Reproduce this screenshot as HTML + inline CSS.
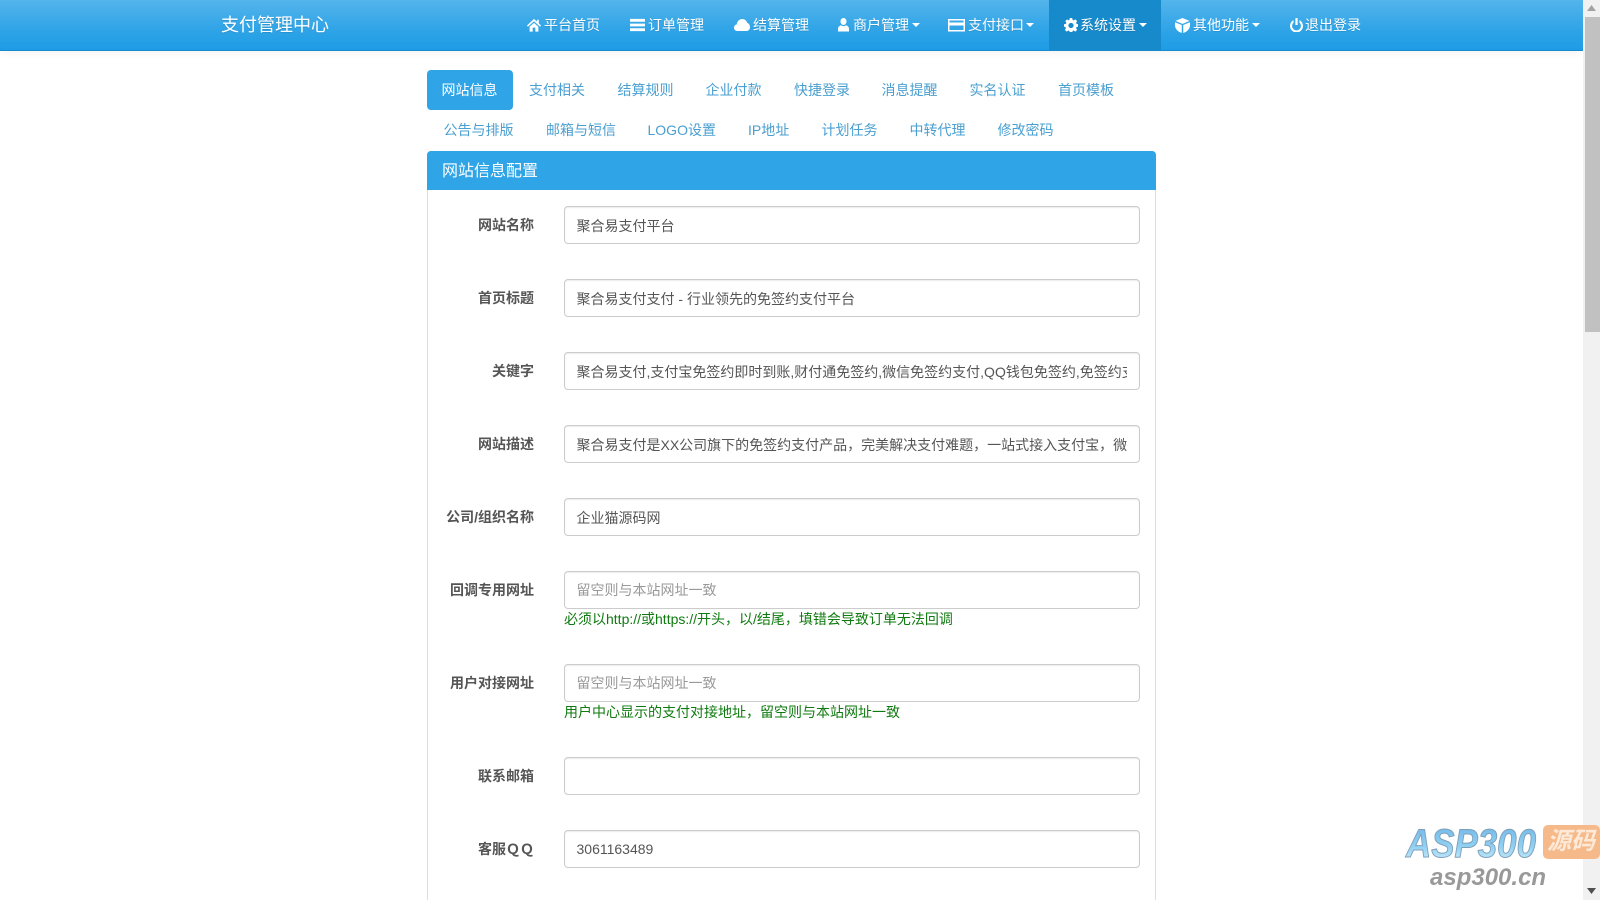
<!DOCTYPE html>
<html lang="zh-CN">
<head>
<meta charset="utf-8">
<title>支付管理中心</title>
<style>
html,body{margin:0;padding:0;width:1600px;height:900px;overflow:hidden;background:#fff}
body{position:relative;font-family:"Liberation Sans","Noto Sans CJK SC",sans-serif;font-size:14px;color:#555}
.nav{position:absolute;left:0;top:0;width:1583px;height:50px;background:linear-gradient(#54b4eb,#2fa4e7 60%,#1d9ce5);border-bottom:1px solid #178acc;box-shadow:0 2px 8px rgba(0,0,0,.05)}
.active{position:absolute;left:1049px;top:0;width:112px;height:50px;background:#178acc}
.t{position:absolute;white-space:nowrap;line-height:20px;height:20px}
.n{color:#fff;top:15px;text-shadow:0 1px 0 rgba(0,0,0,.1)}
.p{color:#4a9fd0}
.ic{position:absolute;fill:#fff}
.caret{position:absolute;top:23px;width:0;height:0;border-left:4px solid transparent;border-right:4px solid transparent;border-top:4px solid #fff}
.pill{position:absolute;left:427px;top:70px;width:86px;height:40px;border-radius:4px;background:#2fa4e7}
.panel{position:absolute;left:427px;top:150.5px;width:729px;height:780px;border:1px solid #ddd;border-radius:4px;box-sizing:border-box;background:#fff}
.head{position:absolute;left:427px;top:150.5px;width:729px;height:39.5px;background:#2fa4e7;border-radius:4px 4px 0 0}
.in{position:absolute;left:564px;width:576px;height:38px;box-sizing:border-box;border:1px solid #ccc;border-radius:4px;padding:0 12px 0 11.5px;line-height:37px;overflow:hidden;white-space:nowrap;color:#555;background:#fff;box-shadow:inset 0 1px 1px rgba(0,0,0,.075)}
.in span{display:block;overflow:hidden;position:relative;top:1px}
.in.ph span,.in.num span{top:0}
.ph{color:#999}
.l{position:absolute;left:430px;width:104px;text-align:right;font-weight:700;line-height:20px;white-space:nowrap;color:#555}
.h{position:absolute;left:564px;color:#0f7a0f;line-height:20px;white-space:nowrap}
.sb{position:absolute;left:1583px;top:0;width:17px;height:900px;background:#f1f1f1}
.th{position:absolute;left:2px;top:17px;width:15px;height:315px;background:#c1c1c1}
.wm{position:absolute;font-family:"Liberation Sans","Noto Sans CJK SC",sans-serif;font-style:italic;font-weight:700;white-space:nowrap}
</style>
</head>
<body>
<div class="nav"></div>
<div class="active"></div>
<div class="t" style="left:221px;top:15px;font-size:18px;color:#fff;text-shadow:0 1px 0 rgba(0,0,0,.1)">支付管理中心</div>

<svg class="ic" style="left:527px;top:18px" width="14" height="14" viewBox="0 0 16 16"><path d="M8 1 0 8.500 1 10l7-6.300L15 10l1-1.500-2.500-2.400V2h-2v2.200zM3 10v5.500h3.500V11h3v4.500H13V10L8 5.500z"/></svg>
<div class="t n" style="left:544px">平台首页</div>

<svg class="ic" style="left:630px;top:18px" width="15" height="14" viewBox="0 0 16 15"><path d="M0 1h16v3H0zM0 6h16v3H0zM0 11h16v3H0z"/></svg>
<div class="t n" style="left:648px">订单管理</div>

<svg class="ic" style="left:734px;top:18px" width="16" height="14" viewBox="0 0 16 14"><path d="M3.500 13C1.500 13 0 11.500 0 9.700 0 8 1.200 6.700 2.800 6.400 3 3.500 5.300 1 8.200 1c2.400 0 4.400 1.600 5 3.900C15 5.500 16 7.300 16 9.200 16 11.300 14.400 13 12.300 13z"/></svg>
<div class="t n" style="left:753px">结算管理</div>

<svg class="ic" style="left:838px;top:18px" width="11" height="14" viewBox="0 0 11 14"><path d="M5.500 0C7.300 0 8.500 1.500 8.500 3.400S7.300 7 5.500 7 2.500 5.300 2.500 3.400 3.700 0 5.500 0zM3 7.200c.7.600 1.500.9 2.500.9s1.800-.3 2.500-.9C9.900 7.800 11 9 11 11v2.500H0V11c0-2 1.100-3.200 3-3.800z"/></svg>
<div class="t n" style="left:853px">商户管理</div>
<div class="caret" style="left:912px"></div>

<svg class="ic" style="left:948px;top:18px" width="17" height="14" viewBox="0 0 17 14"><path fill-rule="evenodd" d="M0 1h17v12.500H0zM1.500 2.500v2h14v-2zM1.500 7.500V12h14V7.500z"/></svg>
<div class="t n" style="left:968px">支付接口</div>
<div class="caret" style="left:1026px"></div>

<svg class="ic" style="left:1064px;top:18px" width="14" height="14" viewBox="0 0 16 16"><path fill-rule="evenodd" d="M6.600 0h2.800l.4 2.200 1.300.5L13 1.500l2 2-1.200 1.900.5 1.300 2.200.4v2.800l-2.200.4-.5 1.300 1.200 1.900-2 2-1.900-1.200-1.300.5-.4 2.200H6.600l-.4-2.200-1.300-.5L3 15.500l-2-2 1.200-1.900-.5-1.300L0 9.900V7.100l2.200-.4.500-1.300L1.500 3.500l2-2 1.400 1.200 1.300-.5zM8 5.500a3 3 0 1 0 0 6 3 3 0 0 0 0-6z"/></svg>
<div class="t n" style="left:1080px">系统设置</div>
<div class="caret" style="left:1139px"></div>

<svg class="ic" style="left:1175px;top:18px" width="15" height="15" viewBox="0 0 16 16"><path d="M8 0 15.500 3 8 6.200.5 3zM0 4.500l7.200 3V16C3.500 15 0 11.500 0 8zM16 4.500V8c0 3.500-3.500 7-7.200 8V7.500z"/></svg>
<div class="t n" style="left:1193px">其他功能</div>
<div class="caret" style="left:1252px"></div>

<svg class="ic" style="left:1290px;top:18px" width="13" height="14" viewBox="0 0 14 15"><path d="M5.800 0h2.400v7.500H5.800z"/><path d="M3.800 2.300v2.600a4.800 4.800 0 1 0 6.400 0V2.300a7 7 0 1 1-6.400 0z"/></svg>
<div class="t n" style="left:1305px">退出登录</div>

<div class="pill"></div>
<div class="t" style="left:441.500px;top:80px;color:#fff">网站信息</div>
<div class="t p" style="left:529px;top:80px">支付相关</div>
<div class="t p" style="left:617.500px;top:80px">结算规则</div>
<div class="t p" style="left:705.500px;top:80px">企业付款</div>
<div class="t p" style="left:794px;top:80px">快捷登录</div>
<div class="t p" style="left:881.500px;top:80px">消息提醒</div>
<div class="t p" style="left:969.500px;top:80px">实名认证</div>
<div class="t p" style="left:1058px;top:80px">首页模板</div>

<div class="t p" style="left:443.500px;top:120px">公告与排版</div>
<div class="t p" style="left:546px;top:120px">邮箱与短信</div>
<div class="t p" style="left:647.500px;top:120px">LOGO设置</div>
<div class="t p" style="left:748px;top:120px">IP地址</div>
<div class="t p" style="left:821.500px;top:120px">计划任务</div>
<div class="t p" style="left:909.500px;top:120px">中转代理</div>
<div class="t p" style="left:997.500px;top:120px">修改密码</div>

<div class="panel"></div>
<div class="head"></div>
<div class="t" style="left:442px;top:162px;font-size:16px;color:#fff">网站信息配置</div>

<div class="l" style="top:215px">网站名称</div>
<div class="in" style="top:206px"><span>聚合易支付平台</span></div>

<div class="l" style="top:288px">首页标题</div>
<div class="in" style="top:279px"><span>聚合易支付支付 - 行业领先的免签约支付平台</span></div>

<div class="l" style="top:361px">关键字</div>
<div class="in" style="top:352px"><span>聚合易支付,支付宝免签约即时到账,财付通免签约,微信免签约支付,QQ钱包免签约,免签约支付</span></div>

<div class="l" style="top:434px">网站描述</div>
<div class="in" style="top:425px"><span>聚合易支付是XX公司旗下的免签约支付产品，完美解决支付难题，一站式接入支付宝，微信，财付通，QQ钱包</span></div>

<div class="l" style="top:507px">公司/组织名称</div>
<div class="in" style="top:498px"><span>企业猫源码网</span></div>

<div class="l" style="top:580px">回调专用网址</div>
<div class="in ph" style="top:571px"><span>留空则与本站网址一致</span></div>
<div class="h" style="top:609px">必须以http://或https://开头，以/结尾，填错会导致订单无法回调</div>

<div class="l" style="top:673px">用户对接网址</div>
<div class="in ph" style="top:664px"><span>留空则与本站网址一致</span></div>
<div class="h" style="top:702px">用户中心显示的支付对接地址，留空则与本站网址一致</div>

<div class="l" style="top:766px">联系邮箱</div>
<div class="in" style="top:757px"></div>

<div class="l" style="top:839px">客服ＱＱ</div>
<div class="in num" style="top:830px"><span>3061163489</span></div>

<div class="sb">
  <div class="th"></div>
  <svg style="position:absolute;left:4px;top:5px" width="9" height="6" viewBox="0 0 9 6"><path d="M4.500 0 9 6H0z" fill="#a3a3a3"/></svg>
  <svg style="position:absolute;left:4px;top:888px" width="9" height="6" viewBox="0 0 9 6"><path d="M0 0h9L4.500 6z" fill="#505050"/></svg>
</div>

<svg style="position:absolute;left:1398px;top:820px" width="148" height="44" viewBox="0 0 148 44">
  <defs>
    <linearGradient id="g" x1="0" y1="0" x2="0" y2="1">
      <stop offset="0" stop-color="#6fb4e6"/>
      <stop offset=".55" stop-color="#8fd0f2"/>
      <stop offset="1" stop-color="#d9f2fb"/>
    </linearGradient>
  </defs>
  <text x="8" y="37" font-family="Liberation Sans,sans-serif" font-size="40" font-weight="700" font-style="italic" textLength="130" lengthAdjust="spacingAndGlyphs" fill="url(#g)" stroke="#7f9fb8" stroke-width="1">ASP300</text>
</svg>
<div style="position:absolute;left:1543px;top:825px;width:57px;height:34px;background:#f6b98a;border-radius:5px"></div>
<div class="wm" style="left:1547px;top:826px;font-size:24px;line-height:32px;color:#fde9d8">源码</div>
<div class="wm" style="left:1430px;top:862px;font-size:24px;line-height:32px;color:#999">asp300.cn</div>
</body>
</html>
